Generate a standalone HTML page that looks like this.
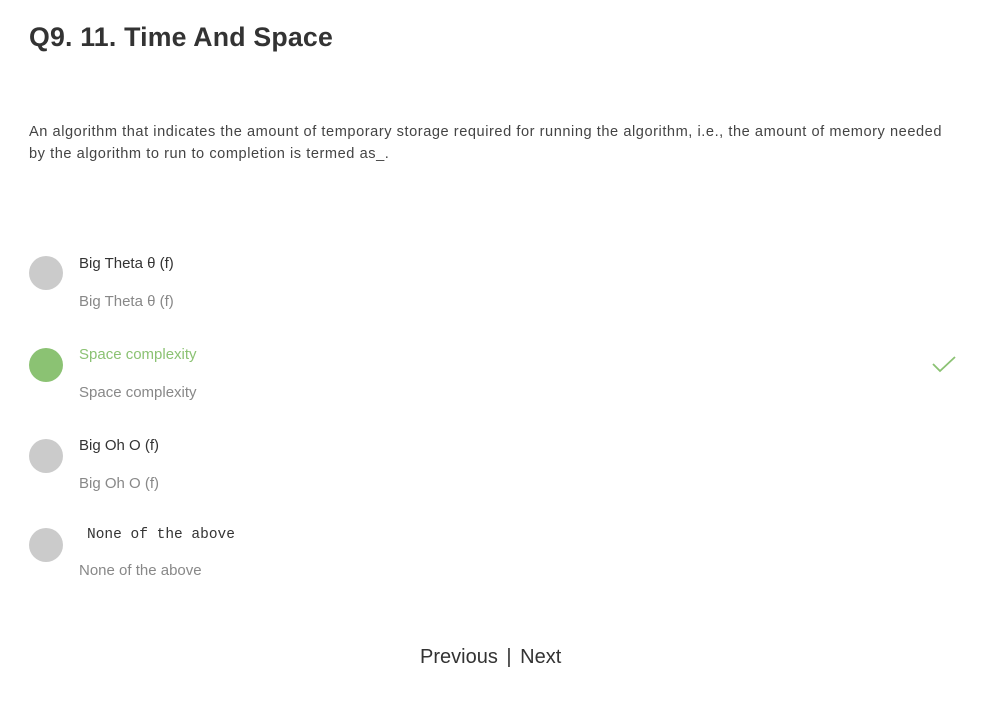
<!DOCTYPE html>
<html><head><meta charset="utf-8"><style>
html,body{margin:0;padding:0;background:#fff;width:994px;height:719px;overflow:hidden;font-family:"Liberation Sans",sans-serif;}
h1{position:absolute;left:29px;top:22px;margin:0;font-size:26.7px;font-weight:bold;color:#333;letter-spacing:0.2px;}
.q{position:absolute;left:29px;top:121px;width:922px;font-size:14.6px;line-height:22px;color:#444;letter-spacing:0.55px;}
.dot{position:absolute;left:29px;width:34px;height:34px;border-radius:50%;background:#cbcbcb;}
.t{position:absolute;left:79px;font-size:15px;color:#333;white-space:nowrap;}
.s{position:absolute;left:79px;font-size:15px;color:#888;white-space:nowrap;}
.nav{position:absolute;left:420px;top:646px;font-size:20px;color:#333;word-spacing:3px;}
</style></head><body>
<h1>Q9. 11. Time And Space</h1>
<div class="q">An algorithm that indicates the amount of temporary storage required for running the algorithm, i.e., the amount of memory needed by the algorithm to run to completion is termed as_.</div>

<div class="dot" style="top:256px"></div>
<div class="t" style="top:255px">Big Theta θ (f)</div>
<div class="s" style="top:293px">Big Theta θ (f)</div>

<div class="dot" style="top:348px;background:#8bc273"></div>
<div class="t" style="top:346px;color:#8bc273">Space complexity</div>
<div class="s" style="top:384px">Space complexity</div>
<svg style="position:absolute;left:931px;top:354px" width="26" height="20" viewBox="0 0 26 20"><path d="M2 10 L9 17 L24 3" fill="none" stroke="#8bc273" stroke-width="1.8"/></svg>

<div class="dot" style="top:439px"></div>
<div class="t" style="top:437px">Big Oh O (f)</div>
<div class="s" style="top:475px">Big Oh O (f)</div>

<div class="dot" style="top:528px"></div>
<div class="t" style="top:527px;font-family:'Liberation Mono',monospace;font-size:14.5px;left:87px">None of the above</div>
<div class="s" style="top:562px">None of the above</div>

<div class="nav">Previous | Next</div>
</body></html>
